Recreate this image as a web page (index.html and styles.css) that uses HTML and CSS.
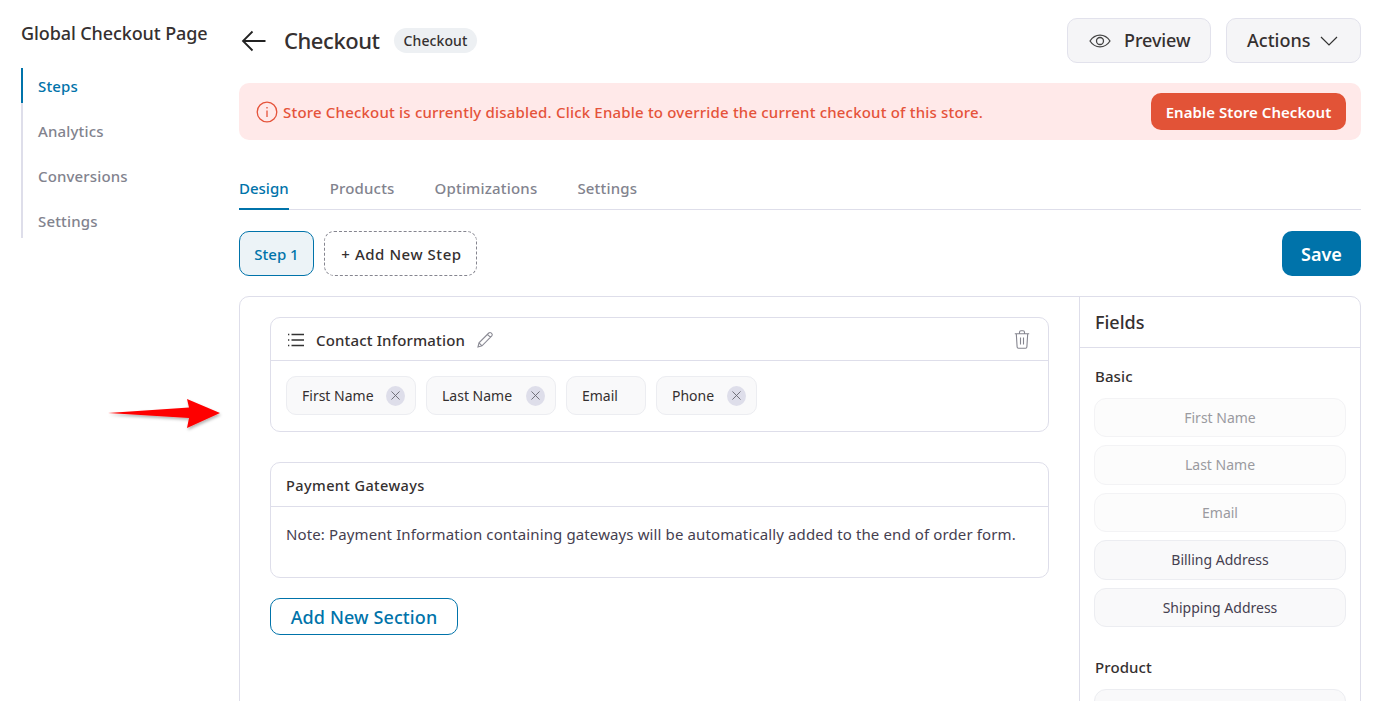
FILE: index.html
```html
<!DOCTYPE html>
<html lang="en">
<head>
<meta charset="utf-8">
<title>Global Checkout Page</title>
<link rel="stylesheet" href="styles.css">
</head>
<body>
<div class="page">
  <aside class="sidebar">
    <div class="side-title">Global Checkout Page</div>
    <nav class="side-nav">
      <a class="side-item active">Steps</a>
      <a class="side-item">Analytics</a>
      <a class="side-item">Conversions</a>
      <a class="side-item">Settings</a>
    </nav>
  </aside>
  <main class="main">
    <header class="topbar">
      <svg class="back" width="26" height="22" viewBox="0 0 26 22" fill="none" stroke="#222" stroke-width="1.8"><path d="M24.500 11H2M11.500 1.500 2 11l9.500 9.500"/></svg>
      <h1 class="title">Checkout</h1>
      <span class="badge">Checkout</span>
      <div class="top-actions">
        <button class="btn-light preview">
          <svg width="22" height="14" viewBox="0 0 22 14" fill="none" stroke="#444" stroke-width="1.3"><path d="M1 7c2.500-3.800 6-5.800 10-5.800S18.500 3.200 21 7c-2.500 3.800-6 5.800-10 5.800S3.500 10.800 1 7z"/><circle cx="11" cy="7" r="3.500"/></svg>
          <span class="btn-label">Preview</span>
        </button>
        <button class="btn-light actions">
          <span class="btn-label">Actions</span>
          <svg width="18" height="10" viewBox="0 0 18 10" fill="none" stroke="#333" stroke-width="1.200"><path d="M1 1l8 8 8-8"/></svg>
        </button>
      </div>
    </header>

    <section class="alert">
      <svg width="22" height="22" viewBox="0 0 22 22" fill="none" stroke="#e5533a" stroke-width="1.300"><circle cx="11" cy="11" r="9.800"/><path d="M11 9.500v6.500M11 6v1.600"/></svg>
      <span class="alert-text">Store Checkout is currently disabled. Click Enable to override the current checkout of this store.</span>
      <button class="btn-enable">Enable Store Checkout</button>
    </section>

    <nav class="tabs">
      <a class="tab active">Design</a>
      <a class="tab">Products</a>
      <a class="tab">Optimizations</a>
      <a class="tab">Settings</a>
    </nav>

    <div class="steps">
      <button class="step">Step 1</button>
      <button class="add-step">+ Add New Step</button>
      <button class="save">Save</button>
    </div>

    <section class="board">
      <div class="canvas">
        <div class="section">
          <div class="section-head">
            <svg width="18" height="14" viewBox="0 0 18 14" fill="none" stroke="#333" stroke-width="1.300"><path d="M4.500 1.500H17M4.500 7H17M4.500 12.500H17M1 1.500h1.300M1 7h1.300M1 12.500h1.300"/></svg>
            <span class="section-title">Contact Information</span>
            <svg width="18" height="18" viewBox="0 0 18 18" fill="none" stroke="#8a8a94" stroke-width="1.100"><path d="M2 16l1-4.200L12.800 2c.7-.7 1.700-.7 2.300 0l.7.700c.6.600.6 1.600 0 2.300L6 14.800 2 16zM3 11.800 6 14.800M11.500 3.300l3 3"/></svg>
            <svg class="trash" width="16" height="19" viewBox="0 0 16 19" fill="none" stroke="#85858f" stroke-width="1.100"><path d="M.8 3.800h14.400M2.300 3.800l.8 13c0 .8.600 1.400 1.400 1.400h7c.8 0 1.400-.6 1.400-1.400l.8-13M5.500 3.800V2.300C5.500 1.400 6.200.8 7 .8h2c.8 0 1.500.6 1.500 1.500v1.500M6.500 7.500v7M9.500 7.500v7"/></svg>
          </div>
          <div class="chips">
            <div class="chip">First Name <span class="chip-x"><svg width="9" height="9" viewBox="0 0 10 10" stroke="#66666f" stroke-width="1"><path d="M.5.500l9 9M9.500.500l-9 9"/></svg></span></div>
            <div class="chip">Last Name <span class="chip-x"><svg width="9" height="9" viewBox="0 0 10 10" stroke="#66666f" stroke-width="1"><path d="M.5.500l9 9M9.500.500l-9 9"/></svg></span></div>
            <div class="chip chip-plain">Email</div>
            <div class="chip">Phone <span class="chip-x"><svg width="9" height="9" viewBox="0 0 10 10" stroke="#66666f" stroke-width="1"><path d="M.5.500l9 9M9.500.500l-9 9"/></svg></span></div>
          </div>
        </div>

        <div class="section gateways">
          <div class="section-head plain"><span class="section-title small">Payment Gateways</span></div>
          <p class="note">Note: Payment Information containing gateways will be automatically added to the end of order form.</p>
        </div>

        <button class="add-section">Add New Section</button>
      </div>

      <aside class="fields">
        <h2 class="fields-title">Fields</h2>
        <div class="fields-body">
          <h3 class="group">Basic</h3>
          <div class="field-list">
            <div class="field used">First Name</div>
            <div class="field used">Last Name</div>
            <div class="field used">Email</div>
            <div class="field">Billing Address</div>
            <div class="field">Shipping Address</div>
          </div>
          <h3 class="group product">Product</h3>
          <div class="field-list">
            <div class="field"></div>
          </div>
        </div>
      </aside>
    </section>
  </main>

  <svg class="arrow" width="116" height="36" viewBox="0 0 116 36"><defs><filter id="as" x="-10%" y="-30%" width="125%" height="170%"><feDropShadow dx="1" dy="2" stdDeviation="1.500" flood-color="#000" flood-opacity=".3"/></filter></defs><path d="M1 16 82 10.500 80 2 113 16 80 31 82 21z" fill="#fe0000" filter="url(#as)"/></svg>
</div>
</body>
</html>
```

FILE: styles.css
```css
* { box-sizing: border-box; }
html, body { margin: 0; height: 100%; overflow: hidden; background: #fff; }
body { font-family: "Noto Sans", sans-serif; color: #353030; }
button { font-family: inherit; cursor: pointer; }
h1, h2, h3, p { margin: 0; font-weight: 500; }

.page { position: relative; display: flex; height: 701px; overflow: hidden; padding: 18px 12px 0 21px; }

.sidebar { width: 218px; flex: none; }
.side-title { font-size: 18px; font-weight: 500; line-height: 30px; letter-spacing: -.1px; color: #353030; }
.side-nav { display: flex; flex-direction: column; gap: 10px; margin-top: 20px; border-left: 2px solid #dedeea; }
.side-item { display: flex; align-items: center; height: 35px; padding-left: 15px; margin-left: -2px; border-left: 2px solid transparent; font-size: 15px; font-weight: 500; letter-spacing: .15px; color: #82838e; }
.side-item.active { border-left-color: #0073aa; color: #0073aa; }

.main { flex: 1; min-width: 0; }

.topbar { display: flex; align-items: center; height: 45px; }
.back { margin-left: 2px; flex: none; }
.title { font-size: 22px; font-weight: 500; letter-spacing: -.45px; margin-left: 17px; padding-bottom: 2px; color: #353030; line-height: 30px; }
.badge { margin-left: 14px; height: 25px; padding: 0 10px; border-radius: 13px; background: #edf0f3; font-size: 14px; font-weight: 500; line-height: 25px; letter-spacing: .1px; color: #353030; }
.top-actions { margin-left: auto; display: flex; gap: 15px; }
.btn-light { display: flex; align-items: center; height: 45px; border: 1px solid #e2e2ec; border-radius: 10px; background: #f5f5f7; font-size: 18px; font-weight: 500; color: #353030; }
.btn-label { padding-bottom: 2px; }
.preview { width: 144px; padding-left: 21px; gap: 13px; letter-spacing: -.1px; }
.actions { width: 135px; padding-left: 20px; gap: 10px; }

.alert { display: flex; align-items: center; height: 57px; margin-top: 20px; padding: 0 15px 0 17px; border-radius: 10px; background: #ffe9e9; color: #e5533a; }
.alert-text { margin-left: 5px; font-size: 15px; font-weight: 500; letter-spacing: .19px; }
.btn-enable { margin-left: auto; width: 195px; height: 37px; border: 0; border-radius: 10px; background: #e25337; color: #fff; font-size: 15px; font-weight: 600; letter-spacing: .05px; }

.tabs { display: flex; gap: 40px; height: 44px; margin-top: 26px; border-bottom: 1px solid #dedeea; }
.tab { height: 44px; padding-top: 11px; font-size: 15px; font-weight: 500; line-height: 22px; letter-spacing: .18px; color: #82838e; }
.tab.active { color: #0073aa; border-bottom: 2px solid #0073aa; letter-spacing: 0; margin-right: 1px; }

.steps { display: flex; align-items: center; gap: 10px; margin-top: 21px; }
.step { width: 75px; height: 45px; border: 1px solid #0073aa; border-radius: 10px; background: #ecf3f7; color: #0073aa; font-size: 15px; font-weight: 500; padding: 0; }
.add-step { width: 153px; height: 45px; border: 1px dashed #85858f; border-radius: 10px; background: #fff; color: #353030; font-size: 15px; font-weight: 500; letter-spacing: .55px; padding: 0 0 0 2px; }
.save { margin-left: auto; width: 79px; height: 45px; border: 0; border-radius: 10px; background: #0073aa; color: #fff; font-size: 18px; font-weight: 600; padding: 0; }

.board { display: flex; height: 500px; margin-top: 20px; border: 1px solid #dedeea; border-radius: 10px; }
.canvas { flex: 1; min-width: 0; padding: 20px 30px 0; }
.section { border: 1px solid #dedeea; border-radius: 10px; }
.section-head { display: flex; align-items: center; height: 43px; padding: 1px 18px 0 16px; border-bottom: 1px solid #dedeea; }
.section-title { margin-left: 11px; margin-right: 11px; font-size: 15px; font-weight: 500; letter-spacing: .15px; color: #353030; }
.section-title.small { margin: 0; font-size: 14.5px; letter-spacing: .4px; }
.section-head.plain { height: 44px; padding-left: 15px; }
.trash { margin-left: auto; }
.chips { display: flex; gap: 10px; padding: 15px; height: 70px; }
.chip { display: flex; align-items: center; justify-content: space-between; width: 130px; height: 39px; padding: 0 10px 0 15px; border: 1px solid #ecedf1; border-radius: 10px; background: #f9f9fa; font-size: 14px; }
.chip:nth-child(3) { width: 80px; }
.chip:nth-child(4) { width: 101px; }
.chip-x { display: flex; align-items: center; justify-content: center; width: 19px; height: 20px; border-radius: 50%; background: #dedeea; }
.gateways { margin-top: 30px; height: 116px; }
.note { padding: 16px 15px 0; font-size: 15px; font-weight: 400; line-height: 22px; letter-spacing: .12px; color: #454050; }
.add-section { display: block; width: 188px; height: 37px; margin-top: 20px; border: 1px solid #0073aa; border-radius: 10px; background: #fff; color: #0073aa; font-size: 18px; font-weight: 500; letter-spacing: .1px; padding: 0; }

.fields { width: 281px; flex: none; border-left: 1px solid #dedeea; }
.fields-title { height: 51px; padding: 0 15px; border-bottom: 1px solid #dedeea; font-size: 18px; line-height: 51px; color: #353030; }
.fields-body { padding: 17px 14px 0; }
.group { padding-left: 1px; font-size: 15px; font-weight: 500; line-height: 22px; letter-spacing: .1px; color: #353030; }
.group.product { margin-top: 29px; }
.field-list { display: flex; flex-direction: column; gap: 8px; margin-top: 10.500px; }
.field { display: flex; align-items: center; justify-content: center; height: 39.500px; border: 1px solid #ecedf1; border-radius: 12px; background: #f9f9fa; font-size: 14px; color: #454050; }
.field.used { background: #fcfcfc; border-color: #f3f3f5; color: #9a9aa0; }

.arrow { position: absolute; left: 107px; top: 397px; }
```
